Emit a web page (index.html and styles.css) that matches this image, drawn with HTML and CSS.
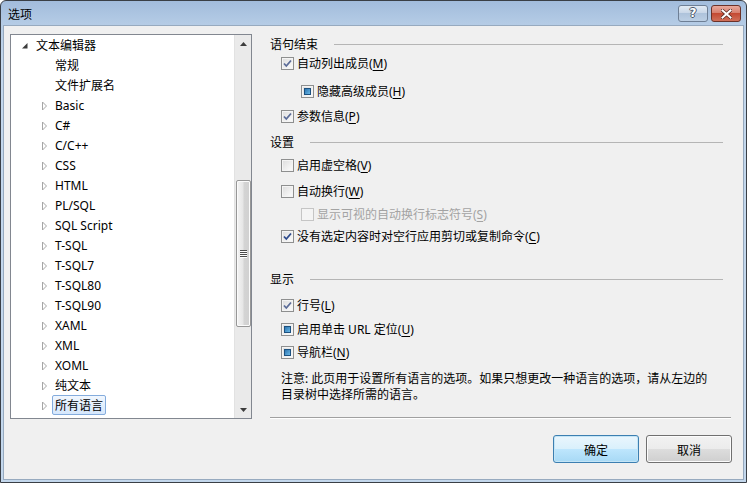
FILE: index.html
```html
<!DOCTYPE html>
<html lang="zh-CN">
<head>
<meta charset="utf-8">
<title>选项</title>
<link rel="stylesheet" href="styles.css">
</head>
<body>
<div class="window">
  <div class="titlebar">
    <span class="title">选项</span>
    <div class="caption-btns">
      <div class="cbtn help">?</div>
      <div class="cbtn close">
        <svg width="11" height="10" viewBox="0 0 11 10"><path d="M1.5 1.5 L9.5 8.5 M9.5 1.5 L1.5 8.5" stroke="#5a2a22" stroke-width="3.6" stroke-linecap="square"/><path d="M1.5 1.5 L9.5 8.5 M9.5 1.5 L1.5 8.5" stroke="#fff" stroke-width="2" stroke-linecap="square"/></svg>
      </div>
    </div>
  </div>
  <div class="client">
    <div class="main">
      <div class="tree">
        <div class="tree-items">
          <div class="trow l0"><span class="exp"><svg width="11" height="20" viewBox="0 0 11 20"><polygon points="5.5,8 5.5,13.5 0,13.5" fill="#3c3c3c"/></svg></span><span class="lbl">文本编辑器</span></div>
          <div class="trow l1"><span class="exp"></span><span class="lbl">常规</span></div>
          <div class="trow l1"><span class="exp"></span><span class="lbl">文件扩展名</span></div>
          <div class="trow l1"><span class="exp"><svg width="11" height="20" viewBox="0 0 11 20"><polygon points="1.5,7 1.5,15 5.5,11" fill="#fff" stroke="#a6a6a6"/></svg></span><span class="lbl">Basic</span></div>
          <div class="trow l1"><span class="exp"><svg width="11" height="20" viewBox="0 0 11 20"><polygon points="1.5,7 1.5,15 5.5,11" fill="#fff" stroke="#a6a6a6"/></svg></span><span class="lbl">C#</span></div>
          <div class="trow l1"><span class="exp"><svg width="11" height="20" viewBox="0 0 11 20"><polygon points="1.5,7 1.5,15 5.5,11" fill="#fff" stroke="#a6a6a6"/></svg></span><span class="lbl">C/C++</span></div>
          <div class="trow l1"><span class="exp"><svg width="11" height="20" viewBox="0 0 11 20"><polygon points="1.5,7 1.5,15 5.5,11" fill="#fff" stroke="#a6a6a6"/></svg></span><span class="lbl">CSS</span></div>
          <div class="trow l1"><span class="exp"><svg width="11" height="20" viewBox="0 0 11 20"><polygon points="1.5,7 1.5,15 5.5,11" fill="#fff" stroke="#a6a6a6"/></svg></span><span class="lbl">HTML</span></div>
          <div class="trow l1"><span class="exp"><svg width="11" height="20" viewBox="0 0 11 20"><polygon points="1.5,7 1.5,15 5.5,11" fill="#fff" stroke="#a6a6a6"/></svg></span><span class="lbl">PL/SQL</span></div>
          <div class="trow l1"><span class="exp"><svg width="11" height="20" viewBox="0 0 11 20"><polygon points="1.5,7 1.5,15 5.5,11" fill="#fff" stroke="#a6a6a6"/></svg></span><span class="lbl">SQL Script</span></div>
          <div class="trow l1"><span class="exp"><svg width="11" height="20" viewBox="0 0 11 20"><polygon points="1.5,7 1.5,15 5.5,11" fill="#fff" stroke="#a6a6a6"/></svg></span><span class="lbl">T-SQL</span></div>
          <div class="trow l1"><span class="exp"><svg width="11" height="20" viewBox="0 0 11 20"><polygon points="1.5,7 1.5,15 5.5,11" fill="#fff" stroke="#a6a6a6"/></svg></span><span class="lbl">T-SQL7</span></div>
          <div class="trow l1"><span class="exp"><svg width="11" height="20" viewBox="0 0 11 20"><polygon points="1.5,7 1.5,15 5.5,11" fill="#fff" stroke="#a6a6a6"/></svg></span><span class="lbl">T-SQL80</span></div>
          <div class="trow l1"><span class="exp"><svg width="11" height="20" viewBox="0 0 11 20"><polygon points="1.5,7 1.5,15 5.5,11" fill="#fff" stroke="#a6a6a6"/></svg></span><span class="lbl">T-SQL90</span></div>
          <div class="trow l1"><span class="exp"><svg width="11" height="20" viewBox="0 0 11 20"><polygon points="1.5,7 1.5,15 5.5,11" fill="#fff" stroke="#a6a6a6"/></svg></span><span class="lbl">XAML</span></div>
          <div class="trow l1"><span class="exp"><svg width="11" height="20" viewBox="0 0 11 20"><polygon points="1.5,7 1.5,15 5.5,11" fill="#fff" stroke="#a6a6a6"/></svg></span><span class="lbl">XML</span></div>
          <div class="trow l1"><span class="exp"><svg width="11" height="20" viewBox="0 0 11 20"><polygon points="1.5,7 1.5,15 5.5,11" fill="#fff" stroke="#a6a6a6"/></svg></span><span class="lbl">XOML</span></div>
          <div class="trow l1"><span class="exp"><svg width="11" height="20" viewBox="0 0 11 20"><polygon points="1.5,7 1.5,15 5.5,11" fill="#fff" stroke="#a6a6a6"/></svg></span><span class="lbl">纯文本</span></div>
          <div class="trow l1"><span class="exp"><svg width="11" height="20" viewBox="0 0 11 20"><polygon points="1.5,7 1.5,15 5.5,11" fill="#fff" stroke="#a6a6a6"/></svg></span><span class="lbl sel">所有语言</span></div>
        </div>
        <div class="scrollbar">
          <div class="sbtn"><svg width="7" height="4" viewBox="0 0 7 4"><polygon points="0,4 7,4 3.5,0" fill="#3c3c3c"/></svg></div>
          <div class="track">
            <div class="thumb">
              <div class="grip"><span></span><span></span><span></span><span></span></div>
            </div>
          </div>
          <div class="sbtn"><svg width="7" height="4" viewBox="0 0 7 4"><polygon points="0,0 7,0 3.5,4" fill="#3c3c3c"/></svg></div>
        </div>
      </div>

      <div class="panel">
        <div class="hdr"><span class="txt">语句结束</span><span class="hline"></span></div>
        <div class="row i1 m1"><span class="cb"><svg width="11" height="11" viewBox="0 0 11 11"><path d="M2 5.5 L4.3 8 L9 2.5" fill="none" stroke="#5b6c98" stroke-width="1.8"/></svg></span><span class="txt">自动列出成员(<u>M</u>)</span></div>
        <div class="row i2 m10"><span class="cb ind"><span class="sq"></span></span><span class="txt">隐藏高级成员(<u>H</u>)</span></div>
        <div class="row i1 m7"><span class="cb"><svg width="11" height="11" viewBox="0 0 11 11"><path d="M2 5.5 L4.3 8 L9 2.5" fill="none" stroke="#5b6c98" stroke-width="1.8"/></svg></span><span class="txt">参数信息(<u>P</u>)</span></div>

        <div class="hdr m8"><span class="txt">设置</span><span class="hline"></span></div>
        <div class="row i1 m5"><span class="cb"></span><span class="txt">启用虚空格(<u>V</u>)</span></div>
        <div class="row i1 m8"><span class="cb"></span><span class="txt">自动换行(<u>W</u>)</span></div>
        <div class="row i2 m5 dis"><span class="cb"></span><span class="txt">显示可视的自动换行标志符号(<u>S</u>)</span></div>
        <div class="row i1 m4"><span class="cb"><svg width="11" height="11" viewBox="0 0 11 11"><path d="M2 5.5 L4.3 8 L9 2.5" fill="none" stroke="#2d4a8c" stroke-width="1.8"/></svg></span><span class="txt">没有选定内容时对空行应用剪切或复制命令(<u>C</u>)</span></div>

        <div class="hdr m25"><span class="txt">显示</span><span class="hline"></span></div>
        <div class="row i1 m8"><span class="cb"><svg width="11" height="11" viewBox="0 0 11 11"><path d="M2 5.5 L4.3 8 L9 2.5" fill="none" stroke="#5b6c98" stroke-width="1.8"/></svg></span><span class="txt">行号(<u>L</u>)</span></div>
        <div class="row i1 m6"><span class="cb ind"><span class="sq"></span></span><span class="txt">启用单击 URL 定位(<u>U</u>)</span></div>
        <div class="row i1 m5"><span class="cb ind"><span class="sq"></span></span><span class="txt">导航栏(<u>N</u>)</span></div>

        <p class="note">注意: 此页用于设置所有语言的选项。如果只想更改一种语言的选项，请从左边的<br>目录树中选择所需的语言。</p>
        <div class="sep"></div>
      </div>
    </div>
    <div class="buttons">
      <div class="btn default">确定</div>
      <div class="btn">取消</div>
    </div>
  </div>
</div>
</body>
</html>
```

FILE: styles.css
```css
* { box-sizing: border-box; }
html, body { margin: 0; padding: 0; }
body {
  width: 747px;
  height: 483px;
  font-family: "Noto Sans", "Noto Sans CJK SC", sans-serif;
  font-size: 12px;
  color: #000;
  background: #fff;
}
.window {
  width: 747px;
  height: 483px;
  border: 1px solid #3a3f46;
  border-radius: 6px 6px 0 0;
  background: linear-gradient(#a2bcdc 0px, #b6cde6 25px, #c3d7ec 60px, #c3d7ec 100%);
  padding: 0 2px 2px 2px;
  display: flex;
  flex-direction: column;
}
.titlebar {
  height: 24px;
  display: flex;
  align-items: flex-start;
  justify-content: space-between;
  padding-left: 5px;
}
.title {
  line-height: 25px;
  font-family: "Noto Sans CJK SC", sans-serif;
  font-size: 12px;
  color: #000;
}
.caption-btns {
  display: flex;
  gap: 3px;
  margin-top: 4px;
  margin-right: 3px;
}
.cbtn {
  width: 30px;
  height: 17px;
  border-radius: 3px;
  display: flex;
  align-items: center;
  justify-content: center;
}
.help {
  border: 1px solid #6e7f95;
  background: linear-gradient(#e2eaf3 0%, #c9d7e8 45%, #aec3db 50%, #bccfe4 100%);
  color: #fff;
  font-family: "DejaVu Sans", sans-serif;
  font-weight: bold;
  font-size: 12px;
  line-height: 15px;
  text-shadow: 1px 0 0 #4a5668, -1px 0 0 #4a5668, 0 1px 0 #4a5668, 0 -1px 0 #4a5668;
}
.close {
  border: 1px solid #6b3229;
  background: linear-gradient(#e9a99c 0%, #d7806f 45%, #c44a33 50%, #d0705a 100%);
}
.client {
  flex: 1;
  background: #f0f0f0;
  border: 1px solid #97aabf;
  display: flex;
  flex-direction: column;
}
.main {
  display: flex;
  padding: 8px 12px 0 6px;
}
.tree {
  width: 242px;
  height: 385px;
  border: 1px solid #828790;
  background: #fff;
  display: flex;
}
.tree-items {
  flex: 1;
  overflow: hidden;
}
.trow {
  height: 20px;
  display: flex;
  align-items: center;
  white-space: nowrap;
}
.trow.l0 { padding-left: 11px; }
.trow.l1 { padding-left: 30px; }
.exp {
  width: 11px;
  height: 20px;
  flex: none;
  display: block;
}
.exp svg { display: block; }
.lbl {
  height: 20px;
  line-height: 20px;
  padding: 0 2px;
  border: 1px solid transparent;
  border-radius: 2px;
}
.lbl.sel {
  border-color: #84acdd;
  background: linear-gradient(#f1f7fe, #d5e7fc);
}
.scrollbar {
  width: 17px;
  display: flex;
  flex-direction: column;
  background: #eaeaea;
  border-left: 1px solid #e2e2e2;
}
.sbtn {
  height: 17px;
  display: flex;
  align-items: center;
  justify-content: center;
}
.track {
  flex: 1;
  padding-top: 128px;
  display: flex;
  justify-content: center;
}
.thumb {
  width: 15px;
  height: 147px;
  border: 1px solid #979797;
  border-radius: 2px;
  background: linear-gradient(90deg, #f4f4f4, #e6e6e6 45%, #d4d4d4 55%, #d0d0d0);
  box-shadow: inset 0 0 0 1px #fbfbfb;
  display: flex;
  align-items: center;
  justify-content: center;
}
.grip {
  display: flex;
  flex-direction: column;
  gap: 1px;
}
.grip span {
  width: 7px;
  height: 1px;
  background: #4b4b4b;
  box-shadow: 0 1px 0 #fdfdfd;
}
.panel {
  flex: 1;
  margin-left: 18px;
  margin-top: 1px;
  display: flex;
  flex-direction: column;
  font-family: "Noto Sans", "Noto Sans CJK SC", sans-serif;
}
.hdr {
  height: 18px;
  line-height: 18px;
  display: flex;
  align-items: center;
  gap: 16px;
  margin-right: 8px;
}
.hline {
  flex: 1;
  height: 1px;
  background: #b5b5b5;
}
.row {
  height: 18px;
  line-height: 18px;
  display: flex;
  align-items: center;
  gap: 3px;
  white-space: nowrap;
}
.txt { padding-top: 2px; }
.row u { text-decoration: underline; text-underline-offset: 2px; }
.i1 { padding-left: 11px; }
.i2 { padding-left: 31px; }
.m1 { margin-top: 1px; }
.m4 { margin-top: 4px; }
.m5 { margin-top: 5px; }
.m6 { margin-top: 6px; }
.m7 { margin-top: 7px; }
.m8 { margin-top: 8px; }
.m10 { margin-top: 10px; }
.m25 { margin-top: 25px; }
.cb {
  width: 13px;
  height: 13px;
  flex: none;
  border: 1px solid #8e8f8f;
  background: linear-gradient(135deg, #dcdcdc, #f7f7f7 80%);
  box-shadow: inset 0 0 0 1px #f4f4f4;
  display: flex;
  align-items: center;
  justify-content: center;
}
.cb svg { display: block; }
.cb.ind .sq {
  width: 7px;
  height: 7px;
  border: 1px solid #1c5180;
  background: linear-gradient(135deg, #2d75b0, #6ab8e6);
}
.row.dis { color: #a3a3a3; }
.row.dis .cb {
  border-color: #c5c5c5;
  background: #f4f4f4;
}
.note {
  margin: 10px 0 0 0;
  padding-left: 11px;
  line-height: 16px;
  white-space: nowrap;
}
.sep {
  margin-top: 14px;
  height: 2px;
  border-top: 1px solid #a0a0a0;
  border-bottom: 1px solid #ffffff;
}
.buttons {
  display: flex;
  justify-content: flex-end;
  gap: 7px;
  margin-top: 16px;
  padding-right: 11px;
}
.btn {
  width: 86px;
  height: 28px;
  border: 1px solid #707070;
  border-radius: 3px;
  background: linear-gradient(#f2f2f2 0%, #ebebeb 50%, #dddddd 50%, #cfcfcf 100%);
  box-shadow: inset 0 0 0 1px #fcfcfc;
  display: flex;
  align-items: center;
  justify-content: center;
  font-family: "Noto Sans CJK SC", sans-serif;
}
.btn.default {
  border-color: #3c7fb1;
  background: linear-gradient(#eaf6fd 0%, #d9f0fc 50%, #bee6fd 50%, #a7d9f5 100%);
  box-shadow: inset 0 0 0 1px #c4e5f6;
}
```
